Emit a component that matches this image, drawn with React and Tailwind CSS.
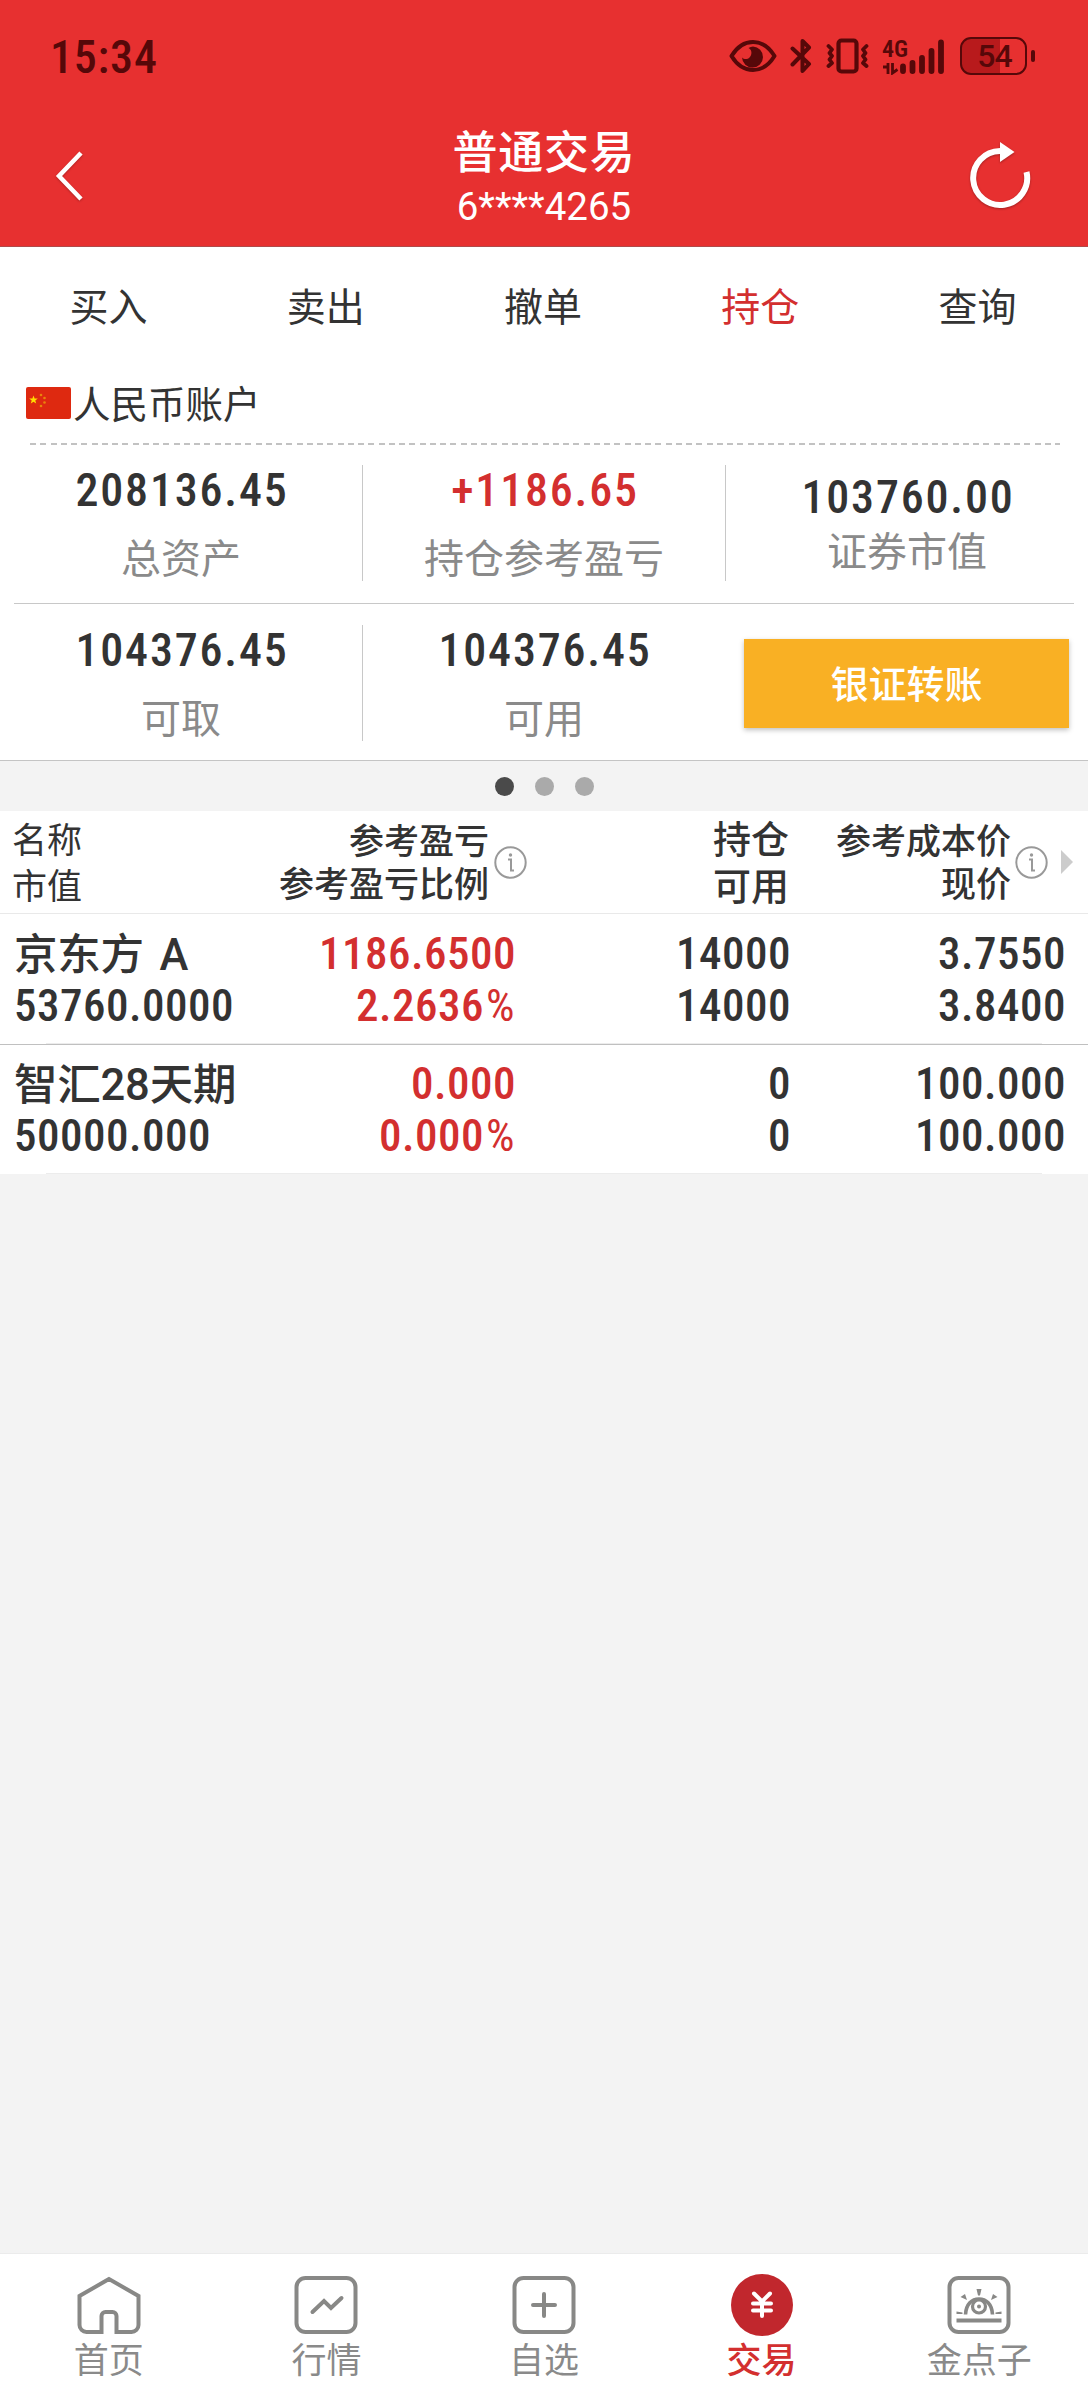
const tabs = ['买入', '卖出', '撤单', '持仓', '查询']

const positions = [
  { name: '京东方 A', value: '53760.0000', pnl: '1186.6500', ratio: '2.2636', qty: '14000', avail: '14000', cost: '3.7550', price: '3.8400' },
  { name: '智汇28天期', value: '50000.000', pnl: '0.000', ratio: '0.000', qty: '0', avail: '0', cost: '100.000', price: '100.000' },
]

function StatusBar() {
  return (
    <div className="flex h-[108px] items-start pt-[34px] pl-[50px] pr-[53px] text-[#560809]">
      <span className="-mt-0.5 font-['Roboto_Condensed'] text-[46px] leading-[50px] font-medium tracking-[0.800px]">15:34</span>
      <div className="ml-auto flex">
        {/* eye */}
        <svg className="mt-[5px]" width="48" height="34" viewBox="0 0 48 34" fill="none">
          <path d="M2.500 17C8 8 15 3 24 3s16 5 21.500 14C40 26 33 31 24 31S8 26 2.500 17z" stroke="currentColor" strokeWidth="4" strokeLinejoin="round" />
          <path d="M24 7.500a10.500 10.500 0 1 1-11 11c2 2 5.500 2 7.500 0 3-3 2.500-8-1-9.500 1.500-1 3-1.500 4.500-1.500z" fill="currentColor" />
        </svg>
        {/* bluetooth */}
        <svg className="mt-1 ml-[13px]" width="22" height="36" viewBox="0 0 22 36" fill="none" stroke="currentColor" strokeWidth="4" strokeLinecap="round" strokeLinejoin="round">
          <path d="M2.500 10.500 19 26l-6.500 7V3L19 9.500 2.500 26.500" />
        </svg>
        {/* vibrate */}
        <svg className="mt-1 ml-3.5" width="44" height="36" viewBox="0 0 44 36" fill="none" stroke="currentColor" strokeLinecap="round" strokeLinejoin="round">
          <rect x="12.500" y="2.500" width="18" height="31" rx="3" strokeWidth="4.200" />
          <path d="M2.500 8 6 11.500 3.500 15 6 18 3.500 21.500 6 25l-3.500 3M40.500 8 37 11.500l2.500 3.500-2.500 3 2.500 3.500L37 25l3.500 3" strokeWidth="3.800" />
        </svg>
        {/* 4G + signal */}
        <div className="mt-1 ml-3 flex w-[64px] items-end">
          <div className="flex w-[19px] flex-col">
            <span className="font-['Roboto_Condensed'] text-[24px] leading-[20px] font-semibold">4G</span>
            <svg className="mt-[3px]" width="17" height="13" viewBox="0 0 17 13" fill="none" stroke="currentColor" strokeWidth="2.800">
              <path d="M1 5h5V1v11M10.500 1v10l5-3.500" />
            </svg>
          </div>
          <svg className="-ml-0.5" width="45" height="36" viewBox="0 0 45 36" stroke="currentColor" strokeWidth="5.800" strokeLinecap="round">
            <path d="M4 27.500V32M13.500 24V32M23 19V32M32.500 12V32M42 3.500V32" />
          </svg>
        </div>
        {/* battery */}
        <div className="mt-[3px] ml-[14px] flex items-center">
          <div className="flex h-[38px] w-[67px] items-center justify-center rounded-[11px] border-[2.500px] border-current bg-[linear-gradient(90deg,#b81a1c_0_38px,transparent_38px)]">
            <span className="ml-0.5 font-['Roboto'] text-[32px] leading-[34px] font-medium tracking-[-1px]">54</span>
          </div>
          <div className="ml-1 h-3 w-1 rounded-full bg-current" />
        </div>
      </div>
    </div>
  )
}

function Header() {
  return (
    <div className="grid h-[138px] grid-cols-[1fr_auto_1fr] text-white">
      <svg className="mt-[42px] ml-[54px] drop-shadow-[0_1px_1px_rgba(0,0,0,0.25)]" width="32" height="52" viewBox="0 0 32 52" fill="none" stroke="currentColor" strokeWidth="4.500">
        <path d="M27 3 5 26l22 23" />
      </svg>
      <div className="flex flex-col items-center pt-[12px]">
        <span className="text-[45px] leading-[60px] font-medium tracking-[0.700px]">普通交易</span>
        <span className="mt-[5px] font-['Roboto'] text-[38.500px] leading-[44px]">6****4265</span>
      </div>
      <svg className="mt-[32px] mr-[55px] justify-self-end drop-shadow-[0_1px_1px_rgba(0,0,0,0.3)]" width="66" height="72" viewBox="0 0 66 72" fill="none">
        <path d="M59.500 32A27 27 0 1 1 33 11" stroke="currentColor" strokeWidth="6" />
        <path d="M33 2v20l14.500-10z" fill="currentColor" />
      </svg>
    </div>
  )
}

function Flag() {
  return (
    <svg className="mt-[2px]" width="45" height="32" viewBox="0 0 45 32">
      <rect width="45" height="32" rx="2" fill="#de2910" />
      <path d="M7.500 8.500l1.100 3h3.200l-2.500 2 .9 3.100-2.700-1.900-2.700 1.900.9-3.100-2.500-2h3.200z" fill="#ffde00" />
      <g fill="#e8850c">
        <circle cx="15" cy="8" r="1.300" />
        <circle cx="18.500" cy="11" r="1.300" />
        <circle cx="18.500" cy="15.500" r="1.300" />
        <circle cx="15" cy="19" r="1.300" />
      </g>
    </svg>
  )
}

function Stat({ value, label, up }) {
  return (
    <div className="flex flex-1 flex-col items-center">
      <span className={`mt-px pl-0.5 font-['Roboto_Condensed'] text-[46px] leading-[48px] font-medium tracking-[1.800px] ${up ? 'text-[#d32f2f]' : ''}`}>{value}</span>
      <span className="mt-[18px] text-[40px] leading-[48px] text-[#8a8a8a]">{label}</span>
    </div>
  )
}

function InfoIcon() {
  return (
    <svg width="33" height="33" viewBox="0 0 33 33" fill="none" stroke="#999">
      <circle cx="16.500" cy="16.500" r="15.200" strokeWidth="2" />
      <path d="M14 13.500h3v11h3" strokeWidth="2" />
      <circle cx="16.500" cy="9" r="1.700" fill="#999" stroke="none" />
    </svg>
  )
}

function TableHead() {
  return (
    <div className="flex h-[103px] border-b border-[#e9e9e9] bg-white">
      <div className="flex w-[240px] flex-col pt-[4px] pl-[12px] text-[35px] leading-[46px]">
        <span>名称</span>
        <span>市值</span>
      </div>
      <div className="flex w-[249px] flex-col items-end pt-[6px] text-[35px] leading-[43px] font-medium">
        <span>参考盈亏</span>
        <span>参考盈亏比例</span>
      </div>
      <div className="mt-[35px] ml-[5px] w-[33px]"><InfoIcon /></div>
      <div className="flex w-[262px] flex-col items-end pt-[2px] text-[38px] leading-[47px] font-medium">
        <span>持仓</span>
        <span>可用</span>
      </div>
      <div className="flex w-[222px] flex-col items-end pt-[6px] text-[35px] leading-[43px] font-medium">
        <span>参考成本价</span>
        <span>现价</span>
      </div>
      <div className="mt-[35px] ml-[4px] w-[33px]"><InfoIcon /></div>
      <svg className="mt-[39px] ml-[13px]" width="12" height="24" viewBox="0 0 12 24" fill="#ccc">
        <path d="M0 0l12 12L0 24z" />
      </svg>
    </div>
  )
}

function PositionRow({ p }) {
  return (
    <div className="flex h-[130px] flex-col border-t border-[#c0c0c0] bg-white first:border-transparent">
      <div className="flex pt-[13px] font-['Roboto_Condensed'] text-[45px] leading-[52px] font-medium tracking-[0.500px]">
        <div className="flex w-[280px] flex-col pl-[14px]">
          <span className="h-[52px] font-['Roboto','Noto_Sans_CJK_SC'] text-[43.500px] leading-[55px] font-medium tracking-[-0.200px] [word-spacing:5px] whitespace-nowrap">{p.name}</span>
          <span>{p.value}</span>
        </div>
        <div className="flex w-[236px] flex-col items-end text-[#d32f2f]">
          <span>{p.pnl}</span>
          <span className="pr-px">{p.ratio}<span className="pl-0.5 font-normal">%</span></span>
        </div>
        <div className="flex w-[275px] flex-col items-end">
          <span>{p.qty}</span>
          <span>{p.avail}</span>
        </div>
        <div className="flex w-[275px] flex-col items-end">
          <span>{p.cost}</span>
          <span>{p.price}</span>
        </div>
      </div>
      <div className="mx-[46px] mt-auto h-px bg-[#ececec]" />
    </div>
  )
}

function NavIcon({ name }) {
  if (name === 'trade') {
    return (
      <svg width="64" height="64" viewBox="0 0 64 64" fill="none">
        <circle cx="32" cy="32" r="31" fill="#c1272d" />
        <path d="M24 20.500l8 8 8-8M32 28.500V43M23 30.500h18M23 37.500h18" stroke="#fff" strokeWidth="4" strokeLinecap="round" />
      </svg>
    )
  }
  return (
    <svg width="64" height="64" viewBox="0 0 64 64" fill="none" stroke="#888886" strokeWidth="4">
      {name === 'home' ? (
        <path d="M32 6 2.500 23v29a7 7 0 0 0 7 7H24.500V43a4 4 0 0 1 4-4h7a4 4 0 0 1 4 4V59h15a7 7 0 0 0 7-7V23z" />
      ) : (
        <rect x="2.500" y="5" width="59" height="54" rx="9" />
      )}
      {name === 'market' && <path d="M18.500 39 30 28l7 7 10.500-10" strokeLinecap="round" />}
      {name === 'watch' && <path d="M21 32h22M32 21v22" strokeLinecap="round" />}
      {name === 'idea' && (
        <>
          <path d="M18.500 41.500C19 31 25 26 32 26s13 5 13.500 15.500" strokeWidth="3.600" />
          <circle cx="32" cy="33.500" r="6.500" strokeWidth="3.200" />
          <circle cx="32" cy="33.500" r="2" fill="#888886" stroke="none" />
          <path d="M9.500 47.500h45" />
          <path d="M29.500 16h5l-1.500 6.500h-2zM13.500 24l4.500-3 2 6zM50.500 24l-4.500-3-2 6zM9.500 38.500l6 1v1.500h-6zM54.500 38.500l-6 1v1.500h6z" fill="#888886" stroke="none" />
        </>
      )}
    </svg>
  )
}

const nav = [
  { icon: 'home', label: '首页' },
  { icon: 'market', label: '行情' },
  { icon: 'watch', label: '自选' },
  { icon: 'trade', label: '交易', active: true },
  { icon: 'idea', label: '金点子' },
]

export default function App() {
  return (
    <div className="flex h-[2400px] w-[1088px] flex-col overflow-hidden bg-[#f3f3f3] font-['Noto_Sans_CJK_SC',sans-serif] text-[#333]">
      <div className="border-b border-[#b04a4a] bg-[#e73030]">
        <StatusBar />
        <Header />
      </div>

      <div className="border-b border-[#c4c4c4] bg-white">
        <div className="grid h-[113px] grid-cols-5 items-center pr-0.5 text-center text-[39px] leading-[48px]">
          {tabs.map(t => (
            <span key={t} className={t === '持仓' ? 'text-[#d32f2f]' : ''}>{t}</span>
          ))}
        </div>

        <div className="flex h-[83px] items-center pl-[26px]">
          <Flag />
          <span className="ml-[2px] text-[37.500px] leading-[48px]">人民币账户</span>
        </div>
        <div className="ml-[30px] h-[2px] w-[1030px] bg-[repeating-linear-gradient(90deg,#c2c2c2_0_6px,transparent_6px_10.250px)]" />

        <div className="flex h-[158px] pt-[20px]">
          <Stat value="208136.45" label="总资产" />
          <div className="h-[116px] w-px bg-[#c8c8c8]" />
          <Stat value="+1186.65" label="持仓参考盈亏" up />
          <div className="h-[116px] w-px bg-[#c8c8c8]" />
          <div className="flex flex-1 flex-col items-center pt-[8px]">
            <span className="pl-0.5 font-['Roboto_Condensed'] text-[46px] leading-[48px] font-medium tracking-[1.800px]">103760.00</span>
            <span className="mt-[4px] text-[40px] leading-[48px] text-[#8a8a8a]">证券市值</span>
          </div>
        </div>
        <div className="mx-[14px] h-px bg-[#c8c8c8]" />
        <div className="flex h-[156px] pt-[21px]">
          <Stat value="104376.45" label="可取" />
          <div className="h-[116px] w-px bg-[#c8c8c8]" />
          <Stat value="104376.45" label="可用" />
          <div className="flex w-[363px] justify-end pt-[14px] pr-[19px]">
            <button className="h-[89px] w-[325px] bg-[#f9b024] pb-1 text-[38px] leading-[48px] font-medium text-white shadow-[0_2px_5px_rgba(0,0,0,0.25)]">银证转账</button>
          </div>
        </div>
      </div>

      <div className="flex h-[50px] items-center justify-center gap-[21px]">
        <span className="size-[19px] rounded-full bg-[#4a4a4a]" />
        <span className="size-[19px] rounded-full bg-[#aaa]" />
        <span className="size-[19px] rounded-full bg-[#aaa]" />
      </div>

      <TableHead />
      <div>
        {positions.map(p => <PositionRow key={p.name} p={p} />)}
      </div>

      <div className="mt-auto grid h-[147px] grid-cols-5 border-t border-[#ebebeb] bg-white">
        {nav.map(n => (
          <div key={n.label} className="flex flex-col items-center pt-[19px]">
            <NavIcon name={n.icon} />
            <span className={`text-[35px] leading-[42px] ${n.active ? 'font-medium text-[#d32f2f]' : 'text-[#8a8a8a]'}`}>{n.label}</span>
          </div>
        ))}
      </div>
    </div>
  )
}
